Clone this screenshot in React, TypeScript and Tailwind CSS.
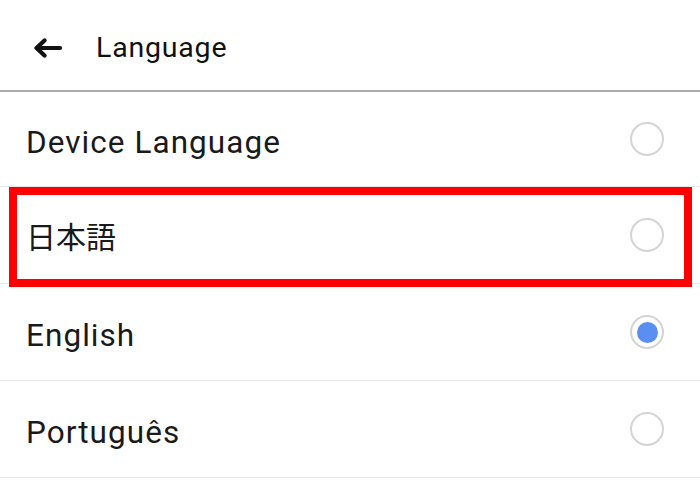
import { useState } from "react";

const languages = [
  { id: "device", label: "Device Language", h: "h-[95px]" },
  { id: "ja", label: "日本語", h: "h-[97px]" },
  { id: "en", label: "English", h: "h-[97px]" },
  { id: "pt", label: "Português", h: "h-[97px]" },
];

function BackArrow() {
  return (
    <svg width="30" height="20" viewBox="0 0 30 20" fill="none" aria-hidden="true">
      <path d="M27 10H4.5" stroke="#111" strokeWidth="4.2" strokeLinecap="round" />
      <path d="M11.5 2.5L3.5 10l8 7.5" stroke="#111" strokeWidth="4.2" strokeLinecap="round" strokeLinejoin="round" />
    </svg>
  );
}

function Radio({ checked }: { checked: boolean }) {
  return (
    <span className="flex h-[34px] w-[34px] items-center justify-center rounded-full border-2 border-[#d4d4d4] bg-white">
      {checked && <span className="h-[21px] w-[21px] rounded-full bg-[#5a8ef0]" />}
    </span>
  );
}

export default function App() {
  const [selected, setSelected] = useState("en");

  return (
    <div className="h-[485px] w-[700px] overflow-hidden bg-white text-[#1a1a1a] [font-family:Roboto,'Noto_Sans_CJK_JP',sans-serif]">
      <header className="flex h-[92px] items-center border-b-2 border-[#ababab] pt-[6px]">
        <button className="ml-[33px] flex h-[20px] w-[30px] items-center">
          <BackArrow />
        </button>
        <h1 className="ml-[33px] text-[28.5px] leading-none tracking-[0.8px] text-[#111]">Language</h1>
      </header>

      <ul>
        {languages.map((lang) => (
          <li
            key={lang.id}
            onClick={() => setSelected(lang.id)}
            className={`relative flex ${lang.h} cursor-pointer items-center justify-between border-b border-[#e6e6e6] pl-[26px] pr-[36px]`}
          >
            <span
              className={`leading-none ${
                lang.id === "ja" ? "pt-[6px] text-[30px]" : "pt-[7px] text-[31.5px] tracking-[1.05px]"
              }`}
            >
              {lang.label}
            </span>
            <Radio checked={selected === lang.id} />
            {lang.id === "ja" && (
              <span className="pointer-events-none absolute top-0 left-[9px] right-[8px] h-[100px] border-[8px] border-[#ff0000]" />
            )}
          </li>
        ))}
      </ul>
    </div>
  );
}
